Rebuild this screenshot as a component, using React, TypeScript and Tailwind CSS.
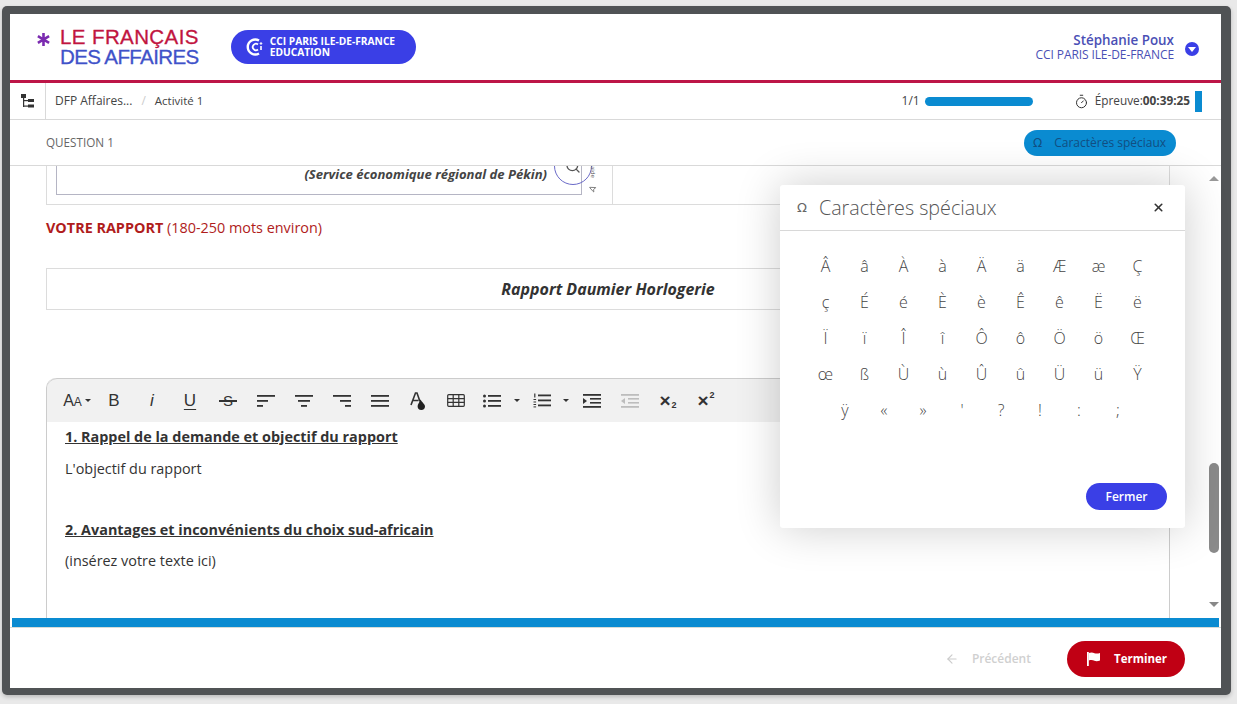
import { ArrowLeft, MousePointer2, Search, Timer, X } from "lucide-react";

const chars = [
  "Â", "â", "À", "à", "Ä", "ä", "Æ", "æ", "Ç",
  "ç", "É", "é", "È", "è", "Ê", "ê", "Ë", "ë",
  "Ï", "ï", "Î", "î", "Ô", "ô", "Ö", "ö", "Œ",
  "œ", "ß", "Ù", "ù", "Û", "û", "Ü", "ü", "Ÿ",
  "ÿ", "«", "»", "'", "?", "!", ":", ";",
];

function Lines({ rows }: { rows: [number, number][] }) {
  return (
    <svg width="18" height="14" viewBox="0 0 18 14" fill="#333">
      {rows.map(([x, w], i) => (
        <rect key={i} x={x} y={1 + i * 5} width={w} height="1.8" />
      ))}
    </svg>
  );
}

function Caret() {
  return <span className="w-0 h-0 border-x-[3px] border-x-transparent border-t-[3px] border-t-[#333]" />;
}

function Tool({ children, w = "w-[38px]" }: { children: React.ReactNode; w?: string }) {
  return <div className={`${w} h-full flex items-center justify-center shrink-0`}>{children}</div>;
}

function Toolbar() {
  return (
    <div className="h-[44px] bg-[#f1f1f1] border-t border-[#ccc] rounded-t-[10px] flex items-center pl-[12px] text-[#333] font-['Liberation_Sans',sans-serif]">
      <Tool w="w-[36px]">
        <span className="text-[16px]">A</span>
        <span className="text-[12px] mt-[2px] mr-[3px]">A</span>
        <Caret />
      </Tool>
      <Tool><span className="text-[17px]">B</span></Tool>
      <Tool><span className="text-[17px] italic">i</span></Tool>
      <Tool><span className="text-[17px] underline underline-offset-[3px]">U</span></Tool>
      <Tool>
        <span className="relative text-[15px] leading-none">
          S
          <span className="absolute -left-[4px] -right-[4px] top-[7px] h-[1.5px] bg-[#333]" />
        </span>
      </Tool>
      <Tool><Lines rows={[[0, 18], [0, 11], [0, 6]]} /></Tool>
      <Tool><Lines rows={[[0, 18], [3, 12], [6, 6]]} /></Tool>
      <Tool><Lines rows={[[0, 18], [7, 11], [12, 6]]} /></Tool>
      <Tool><Lines rows={[[0, 18], [0, 18], [0, 18]]} /></Tool>
      <Tool>
        <svg width="16" height="18" viewBox="0 0 16 18" fill="none">
          <path d="M1 13 L5.5 1 L7 1 L10 9.5 M3 8.5 H8.5" stroke="#333" strokeWidth="1.6" />
          <path d="M10.5 7.5 C12 10.5 15 12 15 14.3 A3.7 3.7 0 0 1 7.6 14.3 C7.6 12 9.5 10.5 10.5 7.5 Z" fill="#222" />
        </svg>
      </Tool>
      <Tool>
        <svg width="18" height="13" viewBox="0 0 18 13" fill="none" stroke="#333" strokeWidth="1.2">
          <rect x="0.7" y="0.7" width="16.6" height="11.6" rx="1" />
          <path d="M0.7 4.6 H17.3 M0.7 8.4 H17.3 M6.2 0.7 V12.3 M11.8 0.7 V12.3" />
        </svg>
      </Tool>
      <Tool w="w-[34px]">
        <svg width="18" height="14" viewBox="0 0 18 14" fill="#333">
          <circle cx="1.5" cy="2" r="1.5" />
          <circle cx="1.5" cy="7" r="1.5" />
          <circle cx="1.5" cy="12" r="1.5" />
          <rect x="5" y="1" width="13" height="1.8" />
          <rect x="5" y="6" width="13" height="1.8" />
          <rect x="5" y="11" width="13" height="1.8" />
        </svg>
      </Tool>
      <Tool w="w-[16px]"><Caret /></Tool>
      <Tool w="w-[34px]">
        <svg width="18" height="15" viewBox="0 0 18 15" fill="#333">
          <rect x="1.2" y="0.5" width="1.2" height="4" />
          <rect x="0.5" y="6" width="2.6" height="1" />
          <rect x="0.5" y="8.5" width="2.6" height="1" />
          <rect x="0.5" y="11" width="2.6" height="1" />
          <rect x="0.5" y="13.4" width="2.6" height="1" />
          <rect x="5" y="1.5" width="13" height="1.8" />
          <rect x="5" y="6.5" width="13" height="1.8" />
          <rect x="5" y="11.5" width="13" height="1.8" />
        </svg>
      </Tool>
      <Tool w="w-[14px]"><Caret /></Tool>
      <Tool>
        <svg width="18" height="14" viewBox="0 0 18 14" fill="#333">
          <rect x="0" y="0" width="18" height="1.8" />
          <rect x="7" y="4" width="11" height="1.6" />
          <rect x="7" y="8" width="11" height="1.6" />
          <rect x="0" y="12" width="18" height="1.8" />
          <path d="M0 4 L4 7 L0 10 Z" />
        </svg>
      </Tool>
      <Tool>
        <svg width="18" height="14" viewBox="0 0 18 14" fill="#bdbdbd">
          <rect x="0" y="0" width="18" height="1.8" />
          <rect x="7" y="4" width="11" height="1.6" />
          <rect x="7" y="8" width="11" height="1.6" />
          <rect x="0" y="12" width="18" height="1.8" />
          <path d="M4 4 L0 7 L4 10 Z" />
        </svg>
      </Tool>
      <Tool>
        <span className="text-[19px] leading-none font-bold">×</span>
        <span className="text-[9px] font-bold mt-[10px] ml-[1px]">2</span>
      </Tool>
      <Tool>
        <span className="text-[19px] leading-none font-bold">×</span>
        <span className="text-[9px] font-bold mb-[9px] ml-[1px]">2</span>
      </Tool>
    </div>
  );
}

function SpecialChars() {
  return (
    <div className="absolute left-[770px] top-[171px] w-[405px] h-[343px] bg-white rounded-[3px] shadow-[0_0_45px_rgba(0,0,0,0.2)] flex flex-col">
      <div className="h-[46px] shrink-0 border-b border-[#d8d8d8] flex items-center pl-[17px] pr-[20px]">
        <span className="text-[13px] text-[#666] font-['DejaVu_Sans',sans-serif]">Ω</span>
        <span className="ml-[12px] text-[19.7px] font-light text-[#555] flex-1">Caractères spéciaux</span>
        <X size={13} strokeWidth={3} className="text-[#333]" />
      </div>
      <div className="mt-[17px] ml-[26px] w-[351px] flex flex-wrap justify-center text-[16px] font-light text-[#444]">
        {chars.map((c) => (
          <span key={c} className="w-[39px] h-[36px] flex items-center justify-center">{c}</span>
        ))}
      </div>
      <div className="mt-auto mb-[18px] mr-[18px] flex justify-end">
        <button className="w-[81px] h-[27px] rounded-full bg-[#3a3fe6] text-white text-[12px] font-semibold">Fermer</button>
      </div>
    </div>
  );
}

export default function App() {
  return (
    <div className="w-[1237px] h-[704px] overflow-hidden bg-[#e9e9e9] pt-[6px] pl-[2px] font-['Open_Sans',sans-serif]">
      <div className="w-[1229px] h-[689px] rounded-[5px] bg-[#505355] pt-[8px] pl-[8px] shadow-[0_2px_4px_rgba(0,0,0,0.2)]">
        <div className="relative w-[1211px] h-[674px] bg-white flex flex-col">
          <header className="h-[66px] shrink-0 flex items-center pl-[26px] pr-[22px]">
            <svg width="15" height="15" viewBox="0 0 15 15" stroke="#7b2bb0" strokeWidth="2.6" className="-mt-[16px] mr-[9px]">
              <path d="M7.5 1 V14 M1.9 4.2 L13.1 10.8 M13.1 4.2 L1.9 10.8" />
            </svg>
            <div className="font-['Liberation_Sans',sans-serif] leading-[20px] [-webkit-text-stroke:0.3px]">
              <div className="text-[#c1153f] text-[20.5px] tracking-[0.4px]">LE FRANÇAIS</div>
              <div className="text-[#3f52c9] text-[20.5px] tracking-[-0.6px]">DES AFFAIRES</div>
            </div>
            <div className="ml-[32px] w-[185px] h-[34px] rounded-full bg-[#3a3fe6] flex items-center pl-[15px] gap-[6px]">
              <svg width="18" height="18" viewBox="0 0 18 18" fill="none" stroke="white" strokeWidth="2.4">
                <path d="M13 2.5 A7.5 7.5 0 1 0 13 15.5" />
                <path d="M12 6.5 A3.2 3.2 0 1 0 12 11.5" strokeWidth="1.8" />
                <circle cx="15" cy="5.5" r="0.8" fill="white" strokeWidth="1" />
                <path d="M15 8 V12" strokeWidth="1.6" />
              </svg>
              <div className="text-[10.2px] leading-[11px] font-bold text-white">
                <div>CCI PARIS ILE-DE-FRANCE</div>
                <div>EDUCATION</div>
              </div>
            </div>
            <div className="ml-auto text-right text-[#4a4fb5] mr-[11px]">
              <div className="text-[13.4px] leading-[14px] font-semibold">Stéphanie Poux</div>
              <div className="text-[12px] leading-[15px] tracking-[-0.1px]">CCI PARIS ILE-DE-FRANCE</div>
            </div>
            <span className="w-[14px] h-[14px] mt-[3px] rounded-full bg-[#3a3fe6] flex items-center justify-center">
              <span className="w-0 h-0 border-x-[4px] border-x-transparent border-t-[5px] border-t-white mt-[1px]" />
            </span>
          </header>
          <div className="h-[3px] shrink-0 bg-[#bd1547]" />

          <div className="h-[37px] shrink-0 border-b border-[#d9d9d9] flex items-center text-[12px] text-[#444]">
            <div className="w-[36px] h-full border-r border-[#d9d9d9] flex items-center justify-center">
              <svg width="13" height="14" viewBox="0 0 13 14" fill="#333">
                <rect x="0" y="0" width="5" height="4" />
                <rect x="2" y="4" width="1.2" height="9" />
                <rect x="2" y="6" width="5" height="1.2" />
                <rect x="2" y="11.5" width="5" height="1.2" />
                <rect x="7" y="5" width="6" height="3" />
                <rect x="7" y="10.5" width="6" height="3" />
              </svg>
            </div>
            <span className="ml-[9px]">DFP Affaires...</span>
            <span className="ml-[9px] text-[#ccc]">/</span>
            <span className="ml-[9px] text-[11.5px]">Activité 1</span>
            <span className="ml-auto mr-[5px]">1/1</span>
            <div className="w-[108px] h-[9px] rounded-full bg-[#0a8bd1]" />
            <Timer size={15} strokeWidth={1.6} className="ml-[41px] text-[#333]" />
            <span className="ml-[6px] text-[11.8px]">Épreuve:</span>
            <span className="font-bold text-[11.8px]">00:39:25</span>
            <div className="ml-[5px] mr-[19px] w-[7px] h-[21px] bg-[#0a8bd1]" />
          </div>

          <div className="h-[46px] shrink-0 border-b border-[#d9d9d9] flex items-center pl-[36px] pr-[45px]">
            <span className="text-[11.7px] text-[#666]">QUESTION 1</span>
            <button className="ml-auto w-[152px] h-[26px] rounded-full bg-[#0a8bd1] text-[#124f82] text-[12px] flex items-center pl-[9px]">
              <span className="font-['DejaVu_Sans',sans-serif] text-[12px]">Ω</span>
              <span className="ml-[12px]">Caractères spéciaux</span>
            </button>
          </div>

          <div className="h-[452px] shrink-0 flex overflow-hidden">
            <div className="flex-1 pl-[36px] pr-[35px] overflow-hidden">
              <div className="h-[39px] border-x border-b border-[#dcdcdc] flex">
                <div className="relative w-[566px] h-full overflow-hidden border-r border-[#dcdcdc] pl-[9px] pr-[30px]">
                  <div className="h-[29px] border-x border-b border-[#b5b5c4] pr-[34px] text-right text-[13.1px] leading-[16px] font-bold italic text-[#444]">
                    (Service économique régional de Pékin)
                  </div>
                  <div className="absolute left-[507px] -top-[19px] w-[38px] h-[38px] rounded-full border border-[#6a6ac8] flex items-end justify-center pb-[10px]">
                    <Search size={16} className="text-[#555]" />
                  </div>
                  <span className="absolute left-[542px] top-0 text-[6px] leading-[8px] text-[#555] [writing-mode:vertical-rl]">aide</span>
                  <MousePointer2 size={8} className="absolute left-[542px] top-[19px] text-[#555] -rotate-[20deg]" />
                </div>
              </div>
              <div className="mt-[13px] text-[14.4px] leading-[20px] text-[#b01c1c]">
                <span className="font-bold">VOTRE RAPPORT</span> (180-250 mots environ)
              </div>
              <div className="mt-[30px] h-[42px] border border-[#dcdcdc] flex items-center justify-center text-[16px] font-bold italic text-[#333]">
                Rapport Daumier Horlogerie
              </div>
              <div className="mt-[68px] border-x border-[#ccc] h-[240px] rounded-t-[10px]">
                <Toolbar />
                <div className="pl-[18px] text-[#333] text-[14.4px] leading-[20px]">
                  <p className="mt-[5px] font-bold underline">1. Rappel de la demande et objectif du rapport</p>
                  <p className="mt-[12px]">L'objectif du rapport</p>
                  <p className="mt-[41px] font-bold underline">2. Avantages et inconvénients du choix sud-africain</p>
                  <p className="mt-[11px]">(insérez votre texte ici)</p>
                </div>
              </div>
            </div>
            <div className="w-[16px] shrink-0 flex flex-col items-center pl-[2px] pt-[10px] pb-[11px]">
              <span className="w-0 h-0 border-x-[5px] border-x-transparent border-b-[5px] border-b-[#999]" />
              <div className="mt-[282px] w-[10px] h-[90px] rounded-full bg-[#8a8a8a]" />
              <span className="mt-auto w-0 h-0 border-x-[5px] border-x-transparent border-t-[5px] border-t-[#888]" />
            </div>
          </div>

          <div className="h-[9px] shrink-0 mx-[2px] bg-[#0a8bd1]" />
          <div className="flex-1 border-t border-[#d5dcd8] flex items-center justify-end pr-[36px] pt-[2px]">
            <ArrowLeft size={14} className="text-[#ccc]" />
            <span className="ml-[13px] text-[12px] font-semibold text-[#d0d0d0]">Précédent</span>
            <button className="ml-[36px] w-[118px] h-[36px] rounded-full bg-[#c00014] text-white text-[11.5px] font-bold flex items-center justify-center gap-[14px] pl-[2px]">
              <svg width="13" height="14" viewBox="0 0 13 14" fill="white">
                <rect x="0" y="0" width="1.8" height="14" />
                <path d="M1.8 1 C4 0 6 0.4 7.5 1.2 C9 1.8 11 1.6 13 1 V8.5 C11 9.2 9 9.4 7.5 8.8 C6 8 4 7.6 1.8 8.5 Z" />
              </svg>
              Terminer
            </button>
          </div>

          <SpecialChars />
        </div>
      </div>
    </div>
  );
}
